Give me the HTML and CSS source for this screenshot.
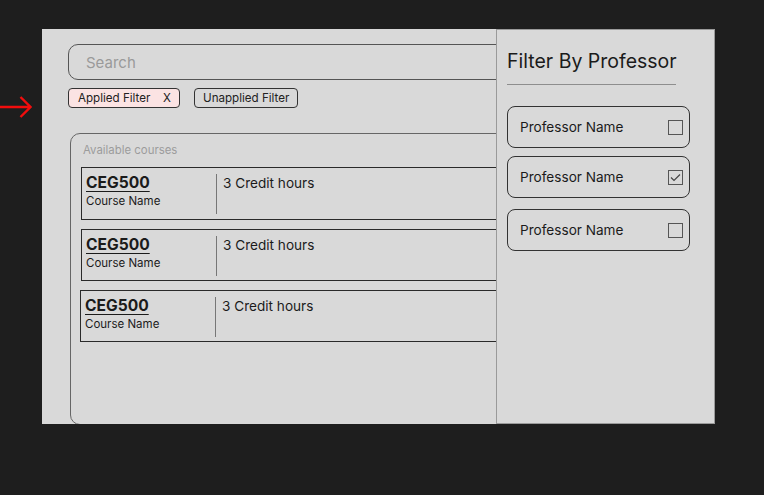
FILE: index.html
```html
<!DOCTYPE html>
<html>
<head>
<meta charset="utf-8">
<link rel="stylesheet" href="styles.css">
</head>
<body>
<div class="stage">
  <svg class="arrow" width="32" height="22" viewBox="0 0 32 22">
    <path d="M0 11 H30.5 M20.5 1 L30.5 11 L20.5 21" fill="none" stroke="#f20d0d" stroke-width="2.4"/>
  </svg>
  <div class="frame">
    <div class="main">
      <div class="search">Search</div>
      <div class="chips">
        <span class="chip chip-applied">Applied Filter <span class="chip-x">X</span></span>
        <span class="chip">Unapplied Filter</span>
      </div>
      <div class="courses">
        <div class="courses-label">Available courses</div>
        <div class="course">
          <div class="course-id"><span class="code">CEG500</span><span class="name">Course Name</span></div>
          <div class="course-credits">3 Credit hours</div>
        </div>
        <div class="course">
          <div class="course-id"><span class="code">CEG500</span><span class="name">Course Name</span></div>
          <div class="course-credits">3 Credit hours</div>
        </div>
        <div class="course course-shift">
          <div class="course-id"><span class="code">CEG500</span><span class="name">Course Name</span></div>
          <div class="course-credits">3 Credit hours</div>
        </div>
      </div>
    </div>
    <aside class="sidebar">
      <h2 class="side-title">Filter By Professor</h2>
      <div class="side-rule"></div>
      <div class="prof"><span>Professor Name</span><span class="box"></span></div>
      <div class="prof"><span>Professor Name</span><span class="box checked"><svg width="11" height="9" viewBox="0 0 11 9"><path d="M1 4.5 L4 7.5 L10 1.5" fill="none" stroke="#444" stroke-width="1.2"/></svg></span></div>
      <div class="prof prof-gap"><span>Professor Name</span><span class="box"></span></div>
    </aside>
  </div>
</div>
</body>
</html>
```
FILE: styles.css
```css
* { box-sizing: border-box; }
html, body { margin: 0; padding: 0; }
body {
  background: #1e1e1e;
  width: 764px;
  height: 495px;
  overflow: hidden;
  font-family: Inter, "Noto Sans", sans-serif;
  color: #1b1b1b;
}
.stage {
  display: flex;
  align-items: flex-start;
  padding-top: 29px;
  gap: 10px;
}
.arrow { margin-top: 67px; flex: none; }
.frame {
  position: relative;
  width: 673px;
  height: 395px;
  background: #d9d9d9;
  overflow: hidden;
}
.main {
  display: flex;
  flex-direction: column;
  padding: 15px 0 0 26px;
}
.search {
  width: 640px;
  height: 36px;
  border: 1.5px solid #555;
  border-radius: 10px;
  padding-left: 17px;
  display: flex;
  align-items: center;
  font-size: 15px;
  color: #9a9a9a;
}
.chips {
  display: flex;
  gap: 14px;
  margin-top: 8px;
}
.chip {
  height: 20px;
  border: 1px solid #333;
  border-radius: 4px;
  font-size: 11.6px;
  display: flex;
  align-items: center;
  padding: 0 8px;
  color: #222;
}
.chip-applied {
  background: #fbe3e3;
  width: 112px;
  justify-content: space-between;
  padding-left: 9px;
}
.courses {
  margin: 25px 0 0 2px;
  width: 640px;
  height: 292px;
  border: 1px solid #666;
  border-radius: 10px;
  padding: 9px 0 0 10px;
}
.courses-label {
  font-size: 11.4px;
  color: #9c9c9c;
  margin-left: 2px;
  height: 15px;
}
.course {
  margin-top: 9px;
  height: 53px;
  border: 1.5px solid #2a2a2a;
  display: flex;
  padding: 6px 0 0 4px;
}
.course + .course { margin-top: 9px; height: 52px; }
.course-shift { margin-left: -1px; }
.course-id {
  width: 131px;
  height: 40px;
  border-right: 1px solid #777;
  display: flex;
  flex-direction: column;
}
.code {
  font-size: 15.6px;
  font-weight: 700;
  line-height: 18px;
  text-decoration: underline;
  text-underline-offset: 3px;
  text-decoration-thickness: 1px;
  align-self: flex-start;
}
.name {
  font-size: 11.5px;
  line-height: 14px;
  margin-top: 2px;
}
.course-credits {
  font-size: 13.6px;
  padding-left: 6px;
  line-height: 18px;
}
.sidebar {
  position: absolute;
  top: 0;
  right: 0;
  bottom: 0;
  width: 219px;
  background: #d9d9d9;
  border: 1px solid #9a9a9a;
  padding: 18px 0 0 10px;
  display: flex;
  flex-direction: column;
}
.side-title {
  margin: 0;
  font-size: 19.5px;
  font-weight: 400;
  line-height: 26px;
  color: #1b1b1b;
}
.side-rule {
  width: 169px;
  height: 1px;
  background: #8e8e8e;
  margin-top: 10px;
}
.prof {
  width: 183px;
  height: 42px;
  border: 1px solid #333;
  border-radius: 8px;
  margin-top: 8px;
  display: flex;
  align-items: center;
  justify-content: space-between;
  padding: 0 6px 0 12px;
  font-size: 13.6px;
}
.side-rule + .prof { margin-top: 21px; }
.prof-gap { margin-top: 11px; }
.box {
  width: 15px;
  height: 15px;
  border: 1.5px solid #555;
  display: flex;
  align-items: center;
  justify-content: center;
}
```
